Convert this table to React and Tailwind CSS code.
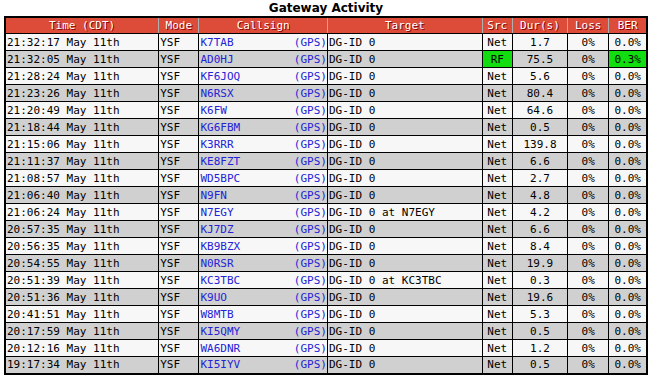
import React from "react";

const rows = [
  ["21:32:17 May 11th", "K7TAB", "DG-ID 0", "Net", "1.7", "0%", "0.0%"],
  ["21:32:05 May 11th", "AD0HJ", "DG-ID 0", "RF", "75.5", "0%", "0.3%"],
  ["21:28:24 May 11th", "KF6JOQ", "DG-ID 0", "Net", "5.6", "0%", "0.0%"],
  ["21:23:26 May 11th", "N6RSX", "DG-ID 0", "Net", "80.4", "0%", "0.0%"],
  ["21:20:49 May 11th", "K6FW", "DG-ID 0", "Net", "64.6", "0%", "0.0%"],
  ["21:18:44 May 11th", "KG6FBM", "DG-ID 0", "Net", "0.5", "0%", "0.0%"],
  ["21:15:06 May 11th", "K3RRR", "DG-ID 0", "Net", "139.8", "0%", "0.0%"],
  ["21:11:37 May 11th", "KE8FZT", "DG-ID 0", "Net", "6.6", "0%", "0.0%"],
  ["21:08:57 May 11th", "WD5BPC", "DG-ID 0", "Net", "2.7", "0%", "0.0%"],
  ["21:06:40 May 11th", "N9FN", "DG-ID 0", "Net", "4.8", "0%", "0.0%"],
  ["21:06:24 May 11th", "N7EGY", "DG-ID 0 at N7EGY", "Net", "4.2", "0%", "0.0%"],
  ["20:57:35 May 11th", "KJ7DZ", "DG-ID 0", "Net", "6.6", "0%", "0.0%"],
  ["20:56:35 May 11th", "KB9BZX", "DG-ID 0", "Net", "8.4", "0%", "0.0%"],
  ["20:54:55 May 11th", "N0RSR", "DG-ID 0", "Net", "19.9", "0%", "0.0%"],
  ["20:51:39 May 11th", "KC3TBC", "DG-ID 0 at KC3TBC", "Net", "0.3", "0%", "0.0%"],
  ["20:51:36 May 11th", "K9UO", "DG-ID 0", "Net", "19.6", "0%", "0.0%"],
  ["20:41:51 May 11th", "W8MTB", "DG-ID 0", "Net", "5.3", "0%", "0.0%"],
  ["20:17:59 May 11th", "KI5QMY", "DG-ID 0", "Net", "0.5", "0%", "0.0%"],
  ["20:12:16 May 11th", "WA6DNR", "DG-ID 0", "Net", "1.2", "0%", "0.0%"],
  ["19:17:34 May 11th", "KI5IYV", "DG-ID 0", "Net", "0.5", "0%", "0.0%"],
];

const headers = ["Time (CDT)", "Mode", "Callsign", "Target", "Src", "Dur(s)", "Loss", "BER"];

const App = () => {
  return (
    <div className="w-[652px] h-[383px] bg-white px-[4px] font-['DejaVu_Sans_Mono',monospace] text-[11px] text-black">
      <div className="h-[16px] text-center font-['DejaVu_Sans',sans-serif] font-bold text-[12px] leading-[16px]">
        Gateway Activity
      </div>
      <table className="w-[644px] table-fixed border-collapse border-2 border-black">
        <colgroup>
          <col className="w-[153px]" />
          <col className="w-[40px]" />
          <col className="w-[128px]" />
          <col className="w-[154px]" />
          <col className="w-[30px]" />
          <col className="w-[55px]" />
          <col className="w-[41px]" />
          <col className="w-[38px]" />
        </colgroup>
        <thead>
          <tr className="bg-[#dd4b39]">
            {headers.map((h) => (
              <th
                key={h}
                className="h-[16px] p-0 leading-[15px] font-normal text-white text-center border border-x-[#b0b0b0] border-b-black border-t-black [text-shadow:1px_1px_0_#8b0000]"
              >
                {h}
              </th>
            ))}
          </tr>
        </thead>
        <tbody>
          {rows.map((r, i) => (
            <tr key={i} className={i % 2 === 0 ? "bg-[#f7f7f7]" : "bg-[#d0d0d0]"}>
              <td className="h-[17px] p-0 pl-[1px] leading-[15px] border border-black whitespace-nowrap">
                {r[0]}
              </td>
              <td className="p-0 pl-[1px] leading-[15px] border border-black">YSF</td>
              <td className="p-0 pl-[1px] leading-[15px] border border-black">
                <div className="flex justify-between text-[#2323d8]">
                  <span>{r[1]}</span>
                  <span>(GPS)</span>
                </div>
              </td>
              <td className="p-0 pl-[1px] leading-[15px] border border-black whitespace-nowrap">{r[2]}</td>
              <td className={"p-0 leading-[15px] text-center border border-black" + (r[3] === "RF" ? " bg-[#11dd11]" : "")}>
                {r[3]}
              </td>
              <td className="p-0 leading-[15px] text-center border border-black">{r[4]}</td>
              <td className="p-0 leading-[15px] text-center border border-black">{r[5]}</td>
              <td className={"p-0 leading-[15px] text-center border border-black" + (r[6] !== "0.0%" ? " bg-[#11dd11]" : "")}>
                {r[6]}
              </td>
            </tr>
          ))}
        </tbody>
      </table>
    </div>
  );
};

export default App;
